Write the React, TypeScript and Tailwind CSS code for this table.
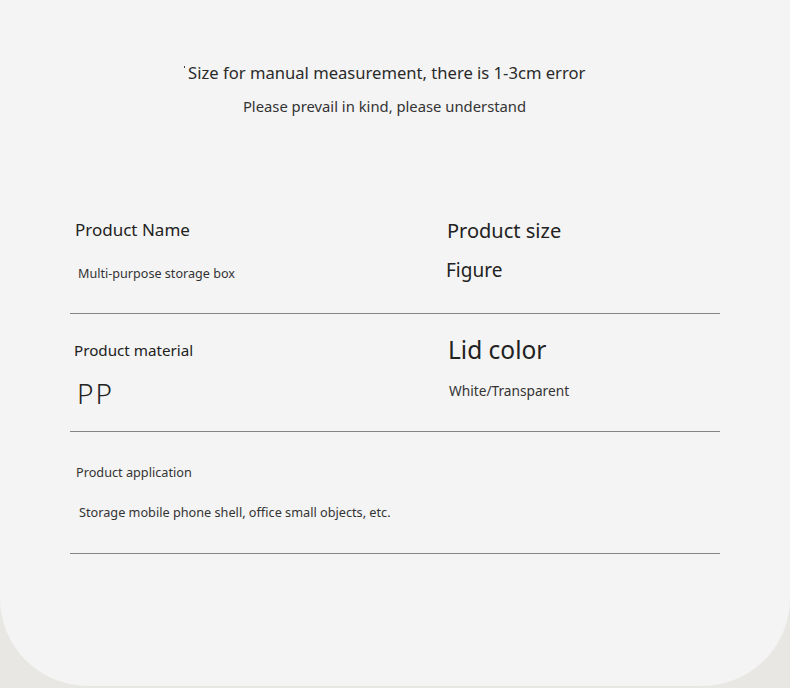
import React from "react";

export default function App() {
  return (
    <div
      className="w-[790px] h-[688px] bg-[#e8e7e3] overflow-hidden"
      style={{ fontFamily: '"Noto Sans", "Open Sans", sans-serif' }}
    >
      <div className="w-[790px] h-[686px] bg-[#f4f4f4] rounded-b-[88px] text-[#222] flow-root">
        <div className="pt-[60px] pr-[21px] flex flex-col items-center">
          <div className="text-[16.6px] leading-[26px] text-[#2a2a2a] flex items-start">
            <span className="w-[1.5px] h-[1.5px] bg-[#444] mt-[6px] mr-[3px]"></span>
            <span>Size for manual measurement, there is 1-3cm error</span>
          </div>
          <div className="mt-[10px] text-[14.8px] leading-[20px] text-[#333]">
            Please prevail in kind, please understand
          </div>
        </div>

        <div className="ml-[70px] w-[650px] mt-[96px]">
          <div className="grid grid-cols-[376px_1fr] h-[102px] border-b border-[#858585]">
            <div className="pt-[6px]">
              <div className="ml-[5px] text-[17px] leading-[24px]">Product Name</div>
              <div className="ml-[8px] mt-[23px] text-[12.6px] leading-[18px] text-[#333]">
                Multi-purpose storage box
              </div>
            </div>
            <div className="pt-[5px]">
              <div className="ml-[1px] text-[20px] leading-[28px]">Product size</div>
              <div className="mt-[13px] text-[19px] leading-[24px]">Figure</div>
            </div>
          </div>

          <div className="grid grid-cols-[376px_1fr] h-[118px] border-b border-[#858585]">
            <div>
              <div className="ml-[4px] mt-[25px] text-[15.2px] leading-[22px]">Product material</div>
              <div className="ml-[7px] mt-[16px] text-[28px] leading-[32px] tracking-[2px] font-light">
                PP
              </div>
            </div>
            <div>
              <div className="ml-[2px] mt-[20px] text-[24.5px] leading-[32px]">Lid color</div>
              <div className="ml-[3px] mt-[16px] text-[13.7px] leading-[18px] text-[#333]">
                White/Transparent
              </div>
            </div>
          </div>

          <div className="h-[122px] border-b border-[#858585] flex flex-col pt-[31px]">
            <div className="ml-[6px] text-[12.7px] leading-[18px] text-[#333]">
              Product application
            </div>
            <div className="ml-[9px] mt-[22px] text-[12.7px] leading-[18px] text-[#333]">
              Storage mobile phone shell, office small objects, etc.
            </div>
          </div>
        </div>
      </div>
    </div>
  );
}
